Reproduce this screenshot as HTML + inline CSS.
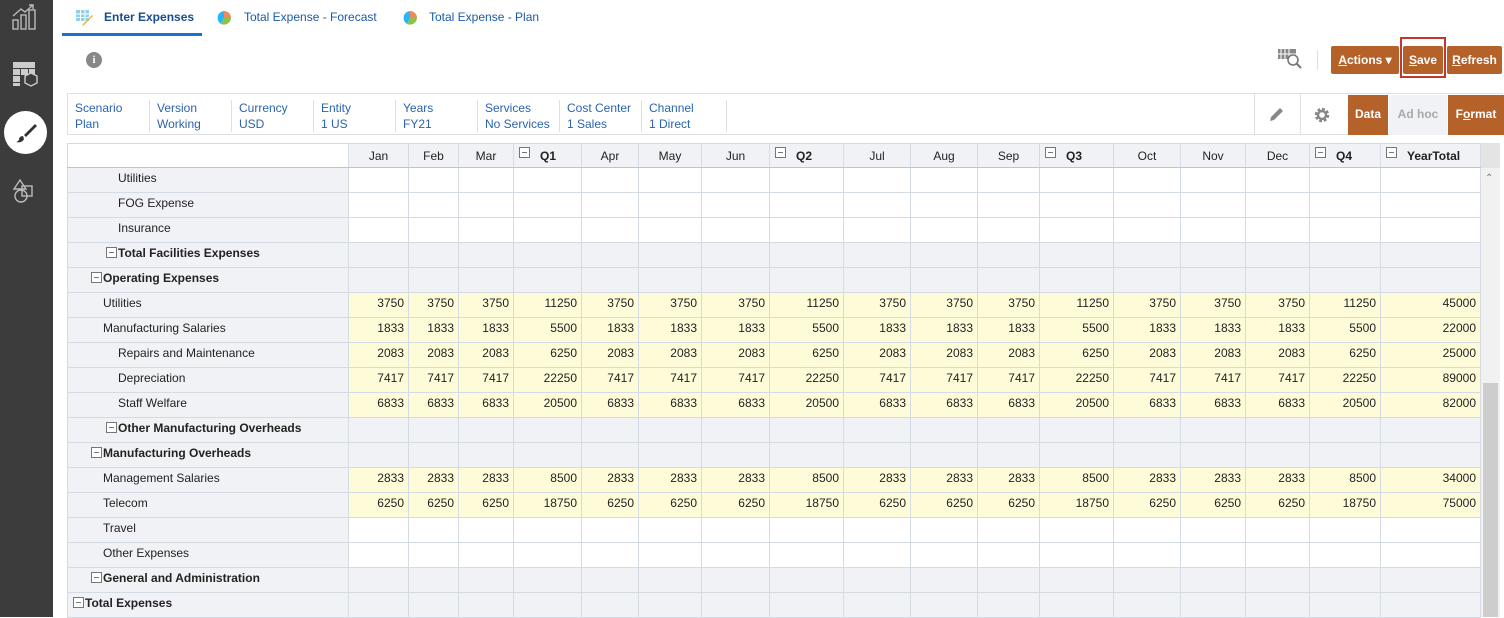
<!DOCTYPE html>
<html><head><meta charset="utf-8"><style>
*{margin:0;padding:0;box-sizing:border-box}
body{width:1504px;height:617px;overflow:hidden;background:#fff;font-family:"Liberation Sans",Arial,sans-serif;font-size:12px;color:#222;position:relative}
.side{position:absolute;left:0;top:0;width:53px;height:617px;background:#3c3c3c}
.abs{position:absolute}
.tab{position:absolute;top:10px;font-size:12px;color:#1b5aa6}
.btn{position:absolute;top:46px;height:28px;background:#b5612a;color:#fff;font-weight:bold;font-size:12px;line-height:28px;text-align:center;border-radius:2px}
.pov{position:absolute;left:67px;top:93px;width:1436px;height:42px;border:1px solid #dde0e4}
.pv{position:absolute;top:6px;height:32px;border-right:1px solid #dde0e4;color:#2a64b0;font-size:12px;line-height:16px;padding-left:7px}
table{position:absolute;left:67px;top:143px;border-collapse:collapse;table-layout:fixed;width:1413px}
td,th{height:25px;border:1px solid #d5dbe3;font-size:12px;white-space:nowrap;overflow:hidden;padding-top:0;padding-bottom:0;line-height:14px}
td{padding-bottom:5px}
th{height:24px;background:#f1f2f5;font-weight:normal;text-align:center;border-bottom:1px solid #c0c4ca}
th.q{font-weight:bold;text-align:left;position:relative;padding-left:26px}
th.q:before,.m:before{content:"";position:absolute;width:9px;height:9px;border:1px solid #777;background:linear-gradient(#777,#777) center/5px 1px no-repeat #fff}
th.q:before{left:5px;top:3px}
td.h{background:#f1f2f5;position:relative}
td.b{font-weight:bold}
.m{position:absolute;top:4px}
td.g{background:#f1f2f5}
td.w{background:#fff}
td.y{background:#fefcd8;text-align:right;padding-right:4px}
.sb{position:absolute;left:1481px;top:143px;width:19px;height:474px;background:#f1f1f1}
</style></head><body>
<div class="side">
<svg class="abs" style="left:11px;top:3px" width="28" height="28" viewBox="0 0 28 28" fill="none" stroke="#bbb" stroke-width="1.4"><rect x="2" y="17" width="5" height="9"/><rect x="10" y="12" width="5" height="14"/><rect x="18" y="7" width="6" height="19"/><path d="M2 13 L10 6 L14 9 L22 2 M18 2 h4 v4"/></svg>
<svg class="abs" style="left:11px;top:60px" width="28" height="28" viewBox="0 0 28 28" fill="#ccc"><path d="M2 2h22v6H2zM2 9h7v6H2zM10 9h7v6h-7zM18 9h6v6h-6zM2 16h7v6H2zM2 23h7v3H2z"/><path d="M14 16l6-3 6 3v7l-6 3-6-3z" fill="#3c3c3c" stroke="#ccc" stroke-width="1.4"/></svg>
<div class="abs" style="left:4px;top:111px;width:43px;height:43px;border-radius:50%;background:#fff"></div>
<svg class="abs" style="left:14px;top:121px" width="24" height="24" viewBox="0 0 24 24"><path d="M21 3 L10 14 l2 2 L23 5z" fill="#333"/><path d="M9 15c-3 0-4 2-4 4-1 1-2 2-3 2 3 1 7 0 8-3z" fill="#333"/></svg>
<svg class="abs" style="left:12px;top:178px" width="26" height="28" viewBox="0 0 26 28" fill="none" stroke="#bbb" stroke-width="1.4"><path d="M8 2 L2 11 H14 Z"/><rect x="10" y="8" width="10" height="10"/><circle cx="9" cy="18" r="6"/></svg>
</div>

<svg class="abs" style="left:75px;top:9px" width="20" height="17" viewBox="0 0 20 17"><rect x="1" y="1" width="13" height="11" fill="#8fd0ef"/><path d="M1 5h13M1 8.5h13M5.5 1v11M10 1v11" stroke="#fff"/><path d="M17 6 L8 15 l-1 2 2-1 9-9z" fill="#f0b030"/></svg>
<div class="tab" style="left:104px;font-weight:bold;color:#1a4c8c">Enter Expenses</div>
<div class="abs" style="left:62px;top:33px;width:140px;height:3px;background:#1673d0"></div>
<svg class="abs" style="left:216px;top:10px" width="16" height="16" viewBox="0 0 16 16"><path d="M8 8V1A7 7 0 0 1 15 8z" fill="#f08a5d"/><path d="M8 8h7a7 7 0 0 1-10 6z" fill="#8bc34a"/><path d="M8 8 5 14A7 7 0 0 1 8 1z" fill="#29b6f6"/></svg>
<div class="tab" style="left:244px">Total Expense - Forecast</div>
<svg class="abs" style="left:402px;top:10px" width="16" height="16" viewBox="0 0 16 16"><path d="M8 8V1A7 7 0 0 1 15 8z" fill="#f08a5d"/><path d="M8 8h7a7 7 0 0 1-10 6z" fill="#8bc34a"/><path d="M8 8 5 14A7 7 0 0 1 8 1z" fill="#29b6f6"/></svg>
<div class="tab" style="left:429px">Total Expense - Plan</div>

<div class="abs" style="left:86px;top:52px;width:16px;height:16px;border-radius:50%;background:#888;color:#fff;font-weight:bold;font-size:11px;text-align:center;line-height:16px;font-family:'Liberation Serif',serif">i</div>

<svg class="abs" style="left:1277px;top:47px" width="26" height="24" viewBox="0 0 26 24"><rect x="1" y="2" width="18" height="10" fill="#888"/><path d="M4 2v10M8 2v10M12 2v10M1 7h18" stroke="#fff"/><circle cx="16" cy="13" r="5" fill="#fff" stroke="#777" stroke-width="1.6"/><path d="M19.5 16.5 24 21" stroke="#777" stroke-width="2"/></svg>
<div class="abs" style="left:1317px;top:50px;width:1px;height:20px;background:#ddd"></div>
<div class="btn" style="left:1331px;width:68px"><u>A</u>ctions &#9662;</div>
<div class="abs" style="left:1400px;top:37px;width:46px;height:41px;border:2px solid #c0392b"></div>
<div class="btn" style="left:1403px;width:40px;top:46px"><u>S</u>ave</div>
<div class="btn" style="left:1447px;width:55px"><u>R</u>efresh</div>

<div class="pov">
<div class="pv" style="left:0;width:82px">Scenario<br>Plan</div>
<div class="pv" style="left:82px;width:82px">Version<br>Working</div>
<div class="pv" style="left:164px;width:82px">Currency<br>USD</div>
<div class="pv" style="left:246px;width:82px">Entity<br>1 US</div>
<div class="pv" style="left:328px;width:82px">Years<br>FY21</div>
<div class="pv" style="left:410px;width:82px">Services<br>No Services</div>
<div class="pv" style="left:492px;width:82px">Cost Center<br>1 Sales</div>
<div class="pv" style="left:574px;width:85px">Channel<br>1 Direct</div>
<div class="abs" style="left:1186px;top:0;width:1px;height:40px;background:#dde0e4"></div>
<div class="abs" style="left:1232px;top:0;width:1px;height:40px;background:#dde0e4"></div>
<svg class="abs" style="left:1199px;top:12px" width="18" height="18" viewBox="0 0 18 18"><path d="M3 15l1-4 9-9 3 3-9 9z" fill="#888"/></svg>
<svg class="abs" style="left:1245px;top:12px" width="18" height="18" viewBox="0 0 18 18"><circle cx="9" cy="9" r="5.5" fill="none" stroke="#888" stroke-width="3.5" stroke-dasharray="2.6 1.7"/><circle cx="9" cy="9" r="4" fill="none" stroke="#888" stroke-width="2.4"/></svg>
<div class="abs" style="left:1280px;top:1px;width:40px;height:40px;background:#b5612a;color:#fff;font-weight:bold;line-height:38px;text-align:center">Data</div>
<div class="abs" style="left:1321px;top:1px;width:58px;height:40px;background:#f1f2f5;color:#aaa;font-weight:bold;line-height:38px;text-align:center">Ad hoc</div>
<div class="abs" style="left:1380px;top:1px;width:56px;height:40px;background:#b5612a;color:#fff;font-weight:bold;line-height:38px;text-align:center">F<u>o</u>rmat</div>
</div>

<table>
<colgroup><col style="width:281px"><col style="width:60px"><col style="width:50px"><col style="width:55px"><col style="width:68px"><col style="width:57px"><col style="width:63px"><col style="width:68px"><col style="width:74px"><col style="width:67px"><col style="width:67px"><col style="width:62px"><col style="width:74px"><col style="width:67px"><col style="width:65px"><col style="width:64px"><col style="width:71px"><col style="width:100px"></colgroup>
<tr><th style="background:#fff;border-left:1px solid #d5dbe3"></th><th>Jan</th><th>Feb</th><th>Mar</th><th class="q">Q1</th><th>Apr</th><th>May</th><th>Jun</th><th class="q">Q2</th><th>Jul</th><th>Aug</th><th>Sep</th><th class="q">Q3</th><th>Oct</th><th>Nov</th><th>Dec</th><th class="q">Q4</th><th class="q">YearTotal</th></tr>
<tr><td class="h" style="padding-left:50px">Utilities</td><td class="w"></td><td class="w"></td><td class="w"></td><td class="w"></td><td class="w"></td><td class="w"></td><td class="w"></td><td class="w"></td><td class="w"></td><td class="w"></td><td class="w"></td><td class="w"></td><td class="w"></td><td class="w"></td><td class="w"></td><td class="w"></td><td class="w"></td></tr>
<tr><td class="h" style="padding-left:50px">FOG Expense</td><td class="w"></td><td class="w"></td><td class="w"></td><td class="w"></td><td class="w"></td><td class="w"></td><td class="w"></td><td class="w"></td><td class="w"></td><td class="w"></td><td class="w"></td><td class="w"></td><td class="w"></td><td class="w"></td><td class="w"></td><td class="w"></td><td class="w"></td></tr>
<tr><td class="h" style="padding-left:50px">Insurance</td><td class="w"></td><td class="w"></td><td class="w"></td><td class="w"></td><td class="w"></td><td class="w"></td><td class="w"></td><td class="w"></td><td class="w"></td><td class="w"></td><td class="w"></td><td class="w"></td><td class="w"></td><td class="w"></td><td class="w"></td><td class="w"></td><td class="w"></td></tr>
<tr><td class="h b" style="padding-left:50px"><span class="m" style="left:38px"></span>Total Facilities Expenses</td><td class="g"></td><td class="g"></td><td class="g"></td><td class="g"></td><td class="g"></td><td class="g"></td><td class="g"></td><td class="g"></td><td class="g"></td><td class="g"></td><td class="g"></td><td class="g"></td><td class="g"></td><td class="g"></td><td class="g"></td><td class="g"></td><td class="g"></td></tr>
<tr><td class="h b" style="padding-left:35px"><span class="m" style="left:23px"></span>Operating Expenses</td><td class="g"></td><td class="g"></td><td class="g"></td><td class="g"></td><td class="g"></td><td class="g"></td><td class="g"></td><td class="g"></td><td class="g"></td><td class="g"></td><td class="g"></td><td class="g"></td><td class="g"></td><td class="g"></td><td class="g"></td><td class="g"></td><td class="g"></td></tr>
<tr><td class="h" style="padding-left:35px">Utilities</td><td class="y">3750</td><td class="y">3750</td><td class="y">3750</td><td class="y">11250</td><td class="y">3750</td><td class="y">3750</td><td class="y">3750</td><td class="y">11250</td><td class="y">3750</td><td class="y">3750</td><td class="y">3750</td><td class="y">11250</td><td class="y">3750</td><td class="y">3750</td><td class="y">3750</td><td class="y">11250</td><td class="y">45000</td></tr>
<tr><td class="h" style="padding-left:35px">Manufacturing Salaries</td><td class="y">1833</td><td class="y">1833</td><td class="y">1833</td><td class="y">5500</td><td class="y">1833</td><td class="y">1833</td><td class="y">1833</td><td class="y">5500</td><td class="y">1833</td><td class="y">1833</td><td class="y">1833</td><td class="y">5500</td><td class="y">1833</td><td class="y">1833</td><td class="y">1833</td><td class="y">5500</td><td class="y">22000</td></tr>
<tr><td class="h" style="padding-left:50px">Repairs and Maintenance</td><td class="y">2083</td><td class="y">2083</td><td class="y">2083</td><td class="y">6250</td><td class="y">2083</td><td class="y">2083</td><td class="y">2083</td><td class="y">6250</td><td class="y">2083</td><td class="y">2083</td><td class="y">2083</td><td class="y">6250</td><td class="y">2083</td><td class="y">2083</td><td class="y">2083</td><td class="y">6250</td><td class="y">25000</td></tr>
<tr><td class="h" style="padding-left:50px">Depreciation</td><td class="y">7417</td><td class="y">7417</td><td class="y">7417</td><td class="y">22250</td><td class="y">7417</td><td class="y">7417</td><td class="y">7417</td><td class="y">22250</td><td class="y">7417</td><td class="y">7417</td><td class="y">7417</td><td class="y">22250</td><td class="y">7417</td><td class="y">7417</td><td class="y">7417</td><td class="y">22250</td><td class="y">89000</td></tr>
<tr><td class="h" style="padding-left:50px">Staff Welfare</td><td class="y">6833</td><td class="y">6833</td><td class="y">6833</td><td class="y">20500</td><td class="y">6833</td><td class="y">6833</td><td class="y">6833</td><td class="y">20500</td><td class="y">6833</td><td class="y">6833</td><td class="y">6833</td><td class="y">20500</td><td class="y">6833</td><td class="y">6833</td><td class="y">6833</td><td class="y">20500</td><td class="y">82000</td></tr>
<tr><td class="h b" style="padding-left:50px"><span class="m" style="left:38px"></span>Other Manufacturing Overheads</td><td class="g"></td><td class="g"></td><td class="g"></td><td class="g"></td><td class="g"></td><td class="g"></td><td class="g"></td><td class="g"></td><td class="g"></td><td class="g"></td><td class="g"></td><td class="g"></td><td class="g"></td><td class="g"></td><td class="g"></td><td class="g"></td><td class="g"></td></tr>
<tr><td class="h b" style="padding-left:35px"><span class="m" style="left:23px"></span>Manufacturing Overheads</td><td class="g"></td><td class="g"></td><td class="g"></td><td class="g"></td><td class="g"></td><td class="g"></td><td class="g"></td><td class="g"></td><td class="g"></td><td class="g"></td><td class="g"></td><td class="g"></td><td class="g"></td><td class="g"></td><td class="g"></td><td class="g"></td><td class="g"></td></tr>
<tr><td class="h" style="padding-left:35px">Management Salaries</td><td class="y">2833</td><td class="y">2833</td><td class="y">2833</td><td class="y">8500</td><td class="y">2833</td><td class="y">2833</td><td class="y">2833</td><td class="y">8500</td><td class="y">2833</td><td class="y">2833</td><td class="y">2833</td><td class="y">8500</td><td class="y">2833</td><td class="y">2833</td><td class="y">2833</td><td class="y">8500</td><td class="y">34000</td></tr>
<tr><td class="h" style="padding-left:35px">Telecom</td><td class="y">6250</td><td class="y">6250</td><td class="y">6250</td><td class="y">18750</td><td class="y">6250</td><td class="y">6250</td><td class="y">6250</td><td class="y">18750</td><td class="y">6250</td><td class="y">6250</td><td class="y">6250</td><td class="y">18750</td><td class="y">6250</td><td class="y">6250</td><td class="y">6250</td><td class="y">18750</td><td class="y">75000</td></tr>
<tr><td class="h" style="padding-left:35px">Travel</td><td class="w"></td><td class="w"></td><td class="w"></td><td class="w"></td><td class="w"></td><td class="w"></td><td class="w"></td><td class="w"></td><td class="w"></td><td class="w"></td><td class="w"></td><td class="w"></td><td class="w"></td><td class="w"></td><td class="w"></td><td class="w"></td><td class="w"></td></tr>
<tr><td class="h" style="padding-left:35px">Other Expenses</td><td class="w"></td><td class="w"></td><td class="w"></td><td class="w"></td><td class="w"></td><td class="w"></td><td class="w"></td><td class="w"></td><td class="w"></td><td class="w"></td><td class="w"></td><td class="w"></td><td class="w"></td><td class="w"></td><td class="w"></td><td class="w"></td><td class="w"></td></tr>
<tr><td class="h b" style="padding-left:35px"><span class="m" style="left:23px"></span>General and Administration</td><td class="g"></td><td class="g"></td><td class="g"></td><td class="g"></td><td class="g"></td><td class="g"></td><td class="g"></td><td class="g"></td><td class="g"></td><td class="g"></td><td class="g"></td><td class="g"></td><td class="g"></td><td class="g"></td><td class="g"></td><td class="g"></td><td class="g"></td></tr>
<tr><td class="h b" style="padding-left:17px"><span class="m" style="left:5px"></span>Total Expenses</td><td class="g"></td><td class="g"></td><td class="g"></td><td class="g"></td><td class="g"></td><td class="g"></td><td class="g"></td><td class="g"></td><td class="g"></td><td class="g"></td><td class="g"></td><td class="g"></td><td class="g"></td><td class="g"></td><td class="g"></td><td class="g"></td><td class="g"></td></tr>
</table>
<div class="sb"><div class="abs" style="left:0;top:0;width:19px;height:25px;background:#e4e4e4"></div><div class="abs" style="left:4px;top:30px;font-size:10px;color:#777">&#8963;</div><div class="abs" style="left:2px;top:240px;width:15px;height:234px;background:#cdcdcd"></div></div>
</body></html>
